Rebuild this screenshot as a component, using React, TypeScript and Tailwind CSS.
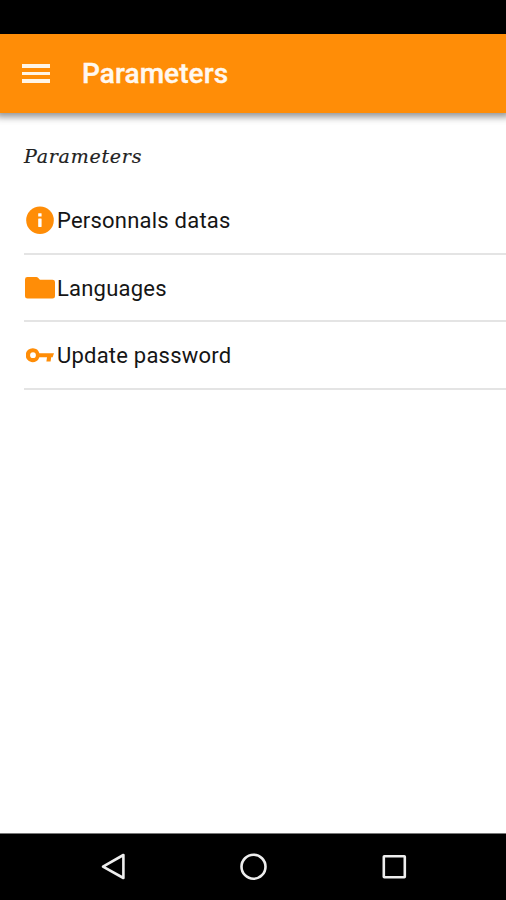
import React from 'react';

const InfoIcon: React.FC = () => (
  <svg width="28" height="28" viewBox="0 0 28 28" className="ml-[2px] shrink-0">
    <circle cx="14" cy="14.2" r="13.8" fill="#ff8d07" />
    <rect x="12.2" y="7.2" width="3.4" height="3.4" rx="0.4" fill="#fff" />
    <rect x="12.2" y="12.6" width="3.4" height="8.4" rx="0.4" fill="#fff" />
  </svg>
);

const FolderIcon: React.FC = () => (
  <svg width="30" height="22" viewBox="0 0 30 22" className="ml-px mt-px shrink-0">
    <path
      d="M2.4 0H11.4Q12.2 0 12.8 .6L14.9 2.7H27.5Q30 2.7 30 5.1V19.2Q30 21.6 27.5 21.6H2.5Q0 21.6 0 19.2V2.4Q0 0 2.4 0Z"
      fill="#ff8d07"
    />
  </svg>
);

const KeyIcon: React.FC = () => (
  <svg width="28" height="15" viewBox="0 0 28 15" className="ml-[2px] mt-px shrink-0">
    <path
      fillRule="evenodd"
      d="M7 0.2A7 7 0 0 1 13.4 5.2H28L26.6 9.2H25.2L24.6 13.4H20.4L21 9.2H13.4A7 7 0 1 1 7 0.2ZM7 4.3A2.9 2.9 0 1 0 7 10.1A2.9 2.9 0 1 0 7 4.3Z"
      fill="#ff8d07"
    />
  </svg>
);

const items = [
  { label: 'Personnals datas', icon: <InfoIcon />, height: 'h-[68px]' },
  { label: 'Languages', icon: <FolderIcon />, height: 'h-[67px]' },
  { label: 'Update password', icon: <KeyIcon />, height: 'h-[68px]' },
];

const Header: React.FC = () => (
  <header className="h-[79px] shrink-0 bg-[#ff8d07] flex items-center pl-[22px] shadow-[0_0_7px_4px_rgba(0,0,0,0.42)]">
    <button className="w-7 flex flex-col gap-1" aria-label="Menu">
      <span className="h-[3.5px] w-full bg-[#fff5e8]" />
      <span className="h-[3.5px] w-full bg-[#fff5e8]" />
      <span className="h-[3.5px] w-full bg-[#fff5e8]" />
    </button>
    <h1 className="ml-8 text-[28px] leading-8 font-medium text-[#fff8ef] tracking-[0.08px] [-webkit-text-stroke:0.4px_#fff8ef]">
      Parameters
    </h1>
  </header>
);

const SystemBar: React.FC = () => (
  <footer className="h-[67px] shrink-0 bg-black border-t border-[#777]">
    <svg width="506" height="66" viewBox="0 834 506 66" fill="none" stroke="#eee" strokeWidth="2.6">
      <path d="M123.4 855V878L103 866.7Z" strokeLinejoin="round" />
      <circle cx="253.5" cy="866.7" r="12" />
      <rect x="383.8" y="856.3" width="21" height="21" rx="0.5" />
    </svg>
  </footer>
);

const App: React.FC = () => {
  return (
    <div className="w-[506px] h-[900px] bg-white flex flex-col overflow-hidden font-['Roboto',sans-serif]">
      <div className="h-[34px] shrink-0 bg-black" />
      <Header />
      <main className="flex-1 pl-6">
        <h2 className="h-[74px] pt-[31px] text-[19px] leading-6 italic text-[#222] tracking-[0.75px] font-['DejaVu_Serif',serif] [-webkit-text-stroke:0.2px_#222]">
          Parameters
        </h2>
        <ul>
          {items.map((item) => (
            <li key={item.label} className={`flex items-center border-b-2 border-[#e4e4e4] ${item.height}`}>
              <span className="w-[33px] flex items-center">{item.icon}</span>
              <span className="pt-[2px] text-[22px] leading-7 text-[#151515] tracking-[0.22px]">{item.label}</span>
            </li>
          ))}
        </ul>
      </main>
      <SystemBar />
    </div>
  );
};

export default App;
